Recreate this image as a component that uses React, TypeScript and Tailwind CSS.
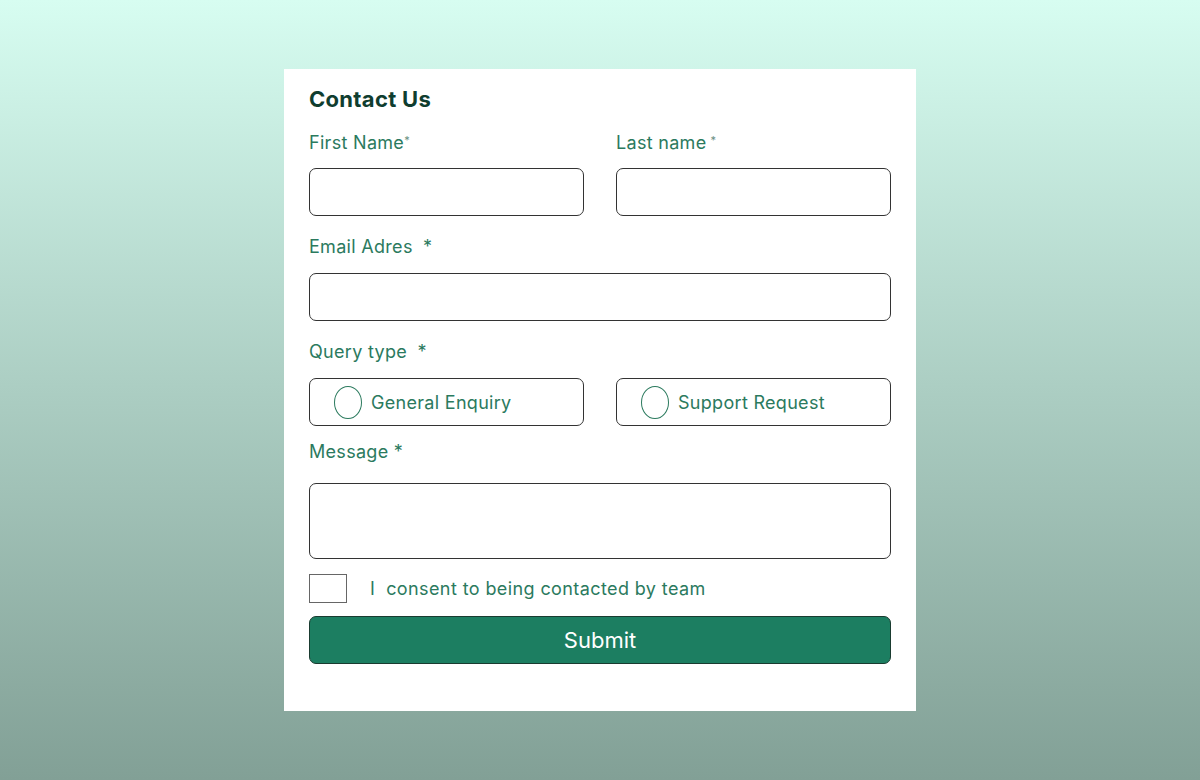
export default function App() {
  const label = "block text-[18px] leading-[26px] tracking-[0.3px] text-[#2b7a5e]";
  const field = "block h-[48px] w-full rounded-[7px] border border-[#333] outline-none";
  return (
    <div
      className="min-h-[780px] w-full bg-gradient-to-b from-[#d7fdf1] to-[#82a096] pt-[69px]"
      style={{ fontFamily: "Inter, 'Noto Sans', sans-serif" }}
    >
      <form className="mx-auto h-[642px] w-[632px] bg-white px-[25px]" onSubmit={(e) => e.preventDefault()}>
        <h1 className="pt-[16px] text-[22px] font-bold leading-[28px] tracking-[0.3px] text-[#0f3d2f]">Contact Us</h1>

        <div className="mt-[17px] grid grid-cols-2 gap-x-[32px]">
          <div>
            <label className={label}>
              First Name<sup className="text-[11px] text-[#6b8f82]">*</sup>
            </label>
            <input className={"mt-[12px] " + field} />
          </div>
          <div>
            <label className={label}>
              Last name<sup className="ml-[4px] text-[11px] text-[#6b8f82]">*</sup>
            </label>
            <input className={"mt-[12px] " + field} />
          </div>
        </div>

        <label className={"mt-[18px] " + label}>
          Email Adres <span className="ml-[5px]">*</span>
        </label>
        <input className={"mt-[13px] " + field} />

        <label className={"mt-[18px] " + label}>
          Query type <span className="ml-[5px]">*</span>
        </label>
        <div className="mt-[13px] grid grid-cols-2 gap-x-[32px]">
          {["General Enquiry", "Support Request"].map((q) => (
            <label key={q} className="flex h-[48px] items-center rounded-[7px] border border-[#333] pl-[24px]">
              <span className="h-[33px] w-[28px] rounded-[50%] border border-[#2b7a5e]" />
              <span className="ml-[9px] text-[18px] tracking-[0.3px] text-[#2b7a5e]">{q}</span>
            </label>
          ))}
        </div>

        <label className={"mt-[13px] " + label}>Message *</label>
        <textarea className="mt-[18px] block h-[76px] w-full resize-none rounded-[7px] border border-[#333] outline-none" />

        <div className="mt-[15px] flex items-center">
          <span className="h-[29px] w-[38px] border border-[#666]" />
          <span className="ml-[23px] text-[18px] tracking-[0.4px] text-[#2b7a5e]">
            I&nbsp; consent to being contacted by team
          </span>
        </div>

        <button
          type="submit"
          className="mt-[13px] block h-[48px] w-full rounded-[7px] border border-[#1a3b30] bg-[#1c7e61] text-[22px] text-white"
        >
          Submit
        </button>
      </form>
    </div>
  );
}
